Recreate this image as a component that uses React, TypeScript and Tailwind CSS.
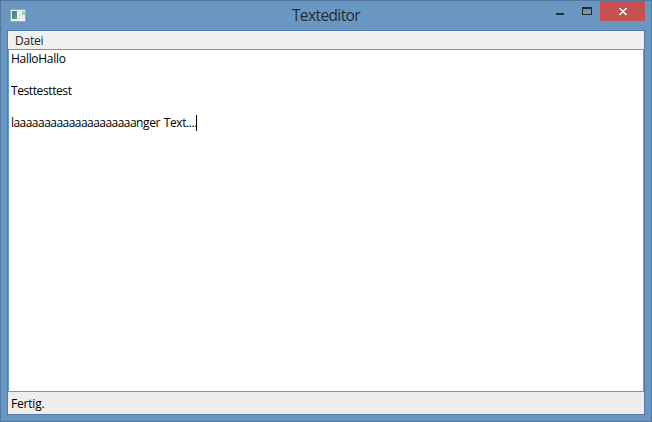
function AppIcon() {
  return (
    <svg width="16" height="13" viewBox="0 0 16 13" shapeRendering="crispEdges">
      <defs>
        <linearGradient id="pane" x1="0" y1="0" x2="1" y2="1">
          <stop offset="0" stopColor="#3f74a8" />
          <stop offset="1" stopColor="#55b078" />
        </linearGradient>
      </defs>
      <rect width="16" height="13" fill="#aaa5a0" />
      <rect x="1" y="1" width="14" height="11" fill="#f4f1ee" />
      <rect x="2" y="2" width="5" height="8" fill="url(#pane)" />
      <rect x="8" y="2" width="3" height="8" fill="#e3e9f2" />
      <rect x="12" y="2" width="3" height="4" fill="#9fd0b8" />
      <rect x="12" y="6" width="3" height="4" fill="#e3e9ed" />
    </svg>
  );
}

function TitleBar() {
  return (
    <header className="flex h-[29px] shrink-0 items-start">
      <div className="flex w-[104px] pt-2 pl-[9px]">
        <AppIcon />
      </div>
      <h1 className="flex-1 pt-[3px] text-center text-[15.5px] leading-[22px] tracking-[-0.6px] text-[#252c33]">
        Texteditor
      </h1>
      <div className="flex w-[104px] shrink-0">
        <button aria-label="Minimieren" className="flex h-5 w-[27px] pt-3 pl-[9px]">
          <span className="h-[2px] w-2 bg-[#2a2a2a]" />
        </button>
        <button aria-label="Maximieren" className="flex h-5 w-[26px] pt-[6px] pl-[8px]">
          <span className="h-2 w-[10px] border border-t-2 border-[#2a2a2a]" />
        </button>
        <button aria-label="Schließen" className="flex h-5 w-[45px] justify-center bg-[#c75050] pt-[7px]">
          <svg width="8" height="7" viewBox="0 0 8 7" shapeRendering="crispEdges" fill="#fff">
            <path d="M0 0h2v1h1v1h2v-1h1v-1h2v1h-1v1h-1v1h-1v1h1v1h1v1h1v1h-2v-1h-1v-1h-2v1h-1v1h-2v-1h1v-1h1v-1h1v-1h-1v-1h-1v-1h-1z" />
          </svg>
        </button>
      </div>
    </header>
  );
}

export default function App() {
  return (
    <div className="flex h-[422px] w-[652px] flex-col border border-[#51779f] bg-[#6a96c2] px-[6px] pb-[6px] font-['Open_Sans','Noto_Sans',sans-serif] text-[12px] text-black">
      <div className="-mx-[6px]">
        <TitleBar />
      </div>
      <main className="flex min-h-0 flex-1 flex-col border border-[#527ca7] bg-[#f0f0f0]">
        <nav className="h-[18px] shrink-0 pl-[7px] leading-[20px]">
          <span className="tracking-[-0.25px] text-[#222]">Datei</span>
        </nav>
        <div className="h-[343px] shrink-0 border border-[#569de5] bg-white pt-px pl-[2px] leading-4">
          <p className="h-8 tracking-[-0.3px]">HalloHallo</p>
          <p className="h-8 tracking-[-0.4px]">Testtesttest</p>
          <p className="flex h-8">
            <span className="tracking-[-0.54px]">laaaaaaaaaaaaaaaaaaaa</span>
            <span className="tracking-[-0.4px] [word-spacing:1px]">nger Text....</span>
            <span className="-ml-px h-4 w-px bg-black" />
          </p>
        </div>
        <footer className="min-h-0 flex-1 bg-[#f0edec] pl-[3px] leading-[24px]">
          <span className="tracking-[-0.2px]">Fertig.</span>
        </footer>
      </main>
    </div>
  );
}
